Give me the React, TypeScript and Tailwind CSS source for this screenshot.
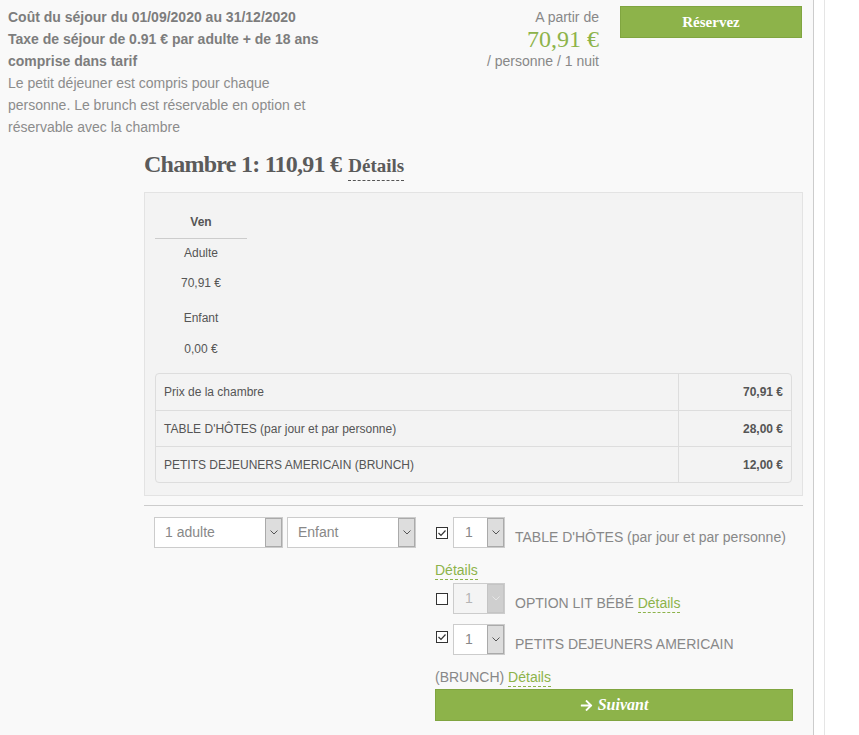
import { FaArrowRight } from 'react-icons/fa';

const sans = "font-['Liberation_Sans',Arial,sans-serif]";
const serif = "font-['Liberation_Serif','Times_New_Roman',serif]";

const Chevron = ({ light }: { light?: boolean }) => (
  <svg width="8" height="5" viewBox="0 0 8 5">
    <polyline points="0.5,0.5 4,4 7.5,0.5" fill="none" stroke={light ? '#e6e6e6' : '#555'} strokeWidth="1" />
  </svg>
);

const Check = ({ checked, className = '' }: { checked?: boolean; className?: string }) => (
  <span className={`flex h-[12px] w-[12px] shrink-0 items-center justify-center border border-[#333] bg-white ${className}`}>
    {checked && (
      <svg width="10" height="10" viewBox="0 0 10 10">
        <polyline points="1.5,5 4,7.5 8.5,2.5" fill="none" stroke="#333" strokeWidth="1.2" />
      </svg>
    )}
  </span>
);

const Select = ({ label, wide, disabled }: { label: string; wide?: boolean; disabled?: boolean }) => (
  <div
    className={`flex h-[31px] shrink-0 border border-[#ccc] ${wide ? 'w-[129px]' : 'w-[52px]'} ${
      disabled ? 'bg-[#f4f4f4] text-[#b5b5b5]' : 'bg-white text-[#888]'
    }`}
  >
    <span className={`flex-1 text-[14px] leading-[29px] ${wide ? 'pl-[10px]' : 'pl-[11px]'}`}>{label}</span>
    <span
      className={`flex w-[17px] items-center justify-center border ${
        disabled ? 'border-[#c4c4c4] bg-[#cfcfcf]' : 'border-[#aaa] bg-[#ddd]'
      }`}
    >
      <Chevron light={disabled} />
    </span>
  </div>
);

const GreenLink = ({ children }: { children: string }) => (
  <span className="inline-block border-b border-dashed border-[#8db34a] text-[14px] leading-[18px] text-[#8db34a]">
    {children}
  </span>
);

const rows = [
  { label: 'Prix de la chambre', value: '70,91 €' },
  { label: "TABLE D'HÔTES (par jour et par personne)", value: '28,00 €' },
  { label: 'PETITS DEJEUNERS AMERICAIN (BRUNCH)', value: '12,00 €' },
];

export default function App() {
  return (
    <div className={`flex min-h-[735px] w-[859px] bg-white ${sans}`}>
      <div className="w-[814px] shrink-0 border-r border-[#ccc] bg-[#f9f9f9]">
        {/* top row */}
        <div className="flex items-start pl-[8px] pr-[11px] pt-[6px]">
          <div className="w-[320px] text-[14px] leading-[22px]">
            <div className="font-bold text-[#7d7d7d]">
              Coût du séjour du 01/09/2020 au 31/12/2020
              <br />
              Taxe de séjour de 0.91 € par adulte + de 18 ans comprise dans tarif
            </div>
            <div className="text-[#8c8c8c]">
              Le petit déjeuner est compris pour chaque personne. Le brunch est réservable en option et réservable
              avec la chambre
            </div>
          </div>
          <div className="flex-1 text-right text-[14px] leading-[22px] text-[#888]">
            <div>A partir de</div>
            <div className={`${serif} text-[24px] leading-[22px] text-[#8db34a]`}>70,91 €</div>
            <div>/ personne / 1 nuit</div>
          </div>
          <button
            className={`ml-[21px] h-[32px] w-[182px] border border-[#80a540] bg-[#8db34a] text-[15px] font-bold text-white ${serif}`}
          >
            Réservez
          </button>
        </div>

        {/* chambre */}
        <div className="pl-[144px] pr-[10px]">
          <div className="mt-[11px] flex items-baseline text-[#5b5b5b]">
            <span className={`${serif} text-[24px] font-bold leading-[30px] tracking-[-0.75px]`}>Chambre 1: 110,91 €</span>
            <span
              className={`${serif} ml-[7px] inline-block border-b border-dashed border-[#555] pb-[4px] text-[19px] font-bold leading-[20px]`}
            >
              Détails
            </span>
          </div>

          <div className="mt-[11px] border border-[#e3e3e3] bg-[#f3f3f3] px-[10px] pb-[12px] pt-[19px] text-[12px] leading-[20px] text-[#555]">
            <div className="w-[92px] text-center">
              <div className="font-bold">Ven</div>
              <div className="mt-[6px] h-px bg-[#ccc]" />
              <div className="mt-[4px]">Adulte</div>
              <div className="mt-[10px]">70,91 €</div>
              <div className="mt-[15px]">Enfant</div>
              <div className="mt-[11px]">0,00 €</div>
            </div>
            <div className="mt-[14px] overflow-hidden rounded-[4px] border border-[#ddd]">
              {rows.map((r, i) => (
                <div key={r.label} className={`flex h-[36px] items-center ${i > 0 ? 'border-t border-[#ddd]' : ''}`}>
                  <div className="flex h-full flex-1 items-center pl-[8px]">{r.label}</div>
                  <div className="flex h-full w-[113px] items-center justify-end border-l border-[#ddd] pr-[8px] font-bold">
                    {r.value}
                  </div>
                </div>
              ))}
            </div>
          </div>

          {/* options */}
          <div className="mt-[9px] flex border-t border-[#ccc] pl-[10px] pr-[10px] pt-[11px]">
            <Select label="1 adulte" wide />
            <div className="ml-[4px]">
              <Select label="Enfant" wide />
            </div>
            <div className="ml-[19px] w-[358px] text-[14px] text-[#888]">
              <div className="flex h-[31px] items-start">
                <Check checked className="ml-[1px] mt-[10px]" />
                <div className="ml-[5px]">
                  <Select label="1" />
                </div>
                <span className="ml-[10px] mt-[10px] leading-[20px]">TABLE D'HÔTES (par jour et par personne)</span>
              </div>
              <div className="mt-[11px] h-[22px] leading-[22px]">
                <GreenLink>Détails</GreenLink>
              </div>

              <div className="mt-[2px] flex h-[31px] items-start">
                <Check className="ml-[1px] mt-[10px]" />
                <div className="ml-[5px]">
                  <Select label="1" disabled />
                </div>
                <span className="ml-[10px] mt-[10px] leading-[20px]">
                  OPTION LIT BÉBÉ <GreenLink>Détails</GreenLink>
                </span>
              </div>

              <div className="mt-[10px] flex h-[31px] items-start">
                <Check checked className="ml-[1px] mt-[7px]" />
                <div className="ml-[5px]">
                  <Select label="1" />
                </div>
                <span className="ml-[10px] mt-[10px] leading-[20px]">PETITS DEJEUNERS AMERICAIN</span>
              </div>
              <div className="mt-[11px] h-[22px] leading-[22px]">
                (BRUNCH) <GreenLink>Détails</GreenLink>
              </div>

              <button
                className={`mt-px flex h-[32px] w-full items-center justify-center gap-[5px] border border-[#80a540] bg-[#8db34a] text-[16px] font-bold italic text-white ${serif}`}
              >
                <FaArrowRight className="h-[13px] w-[13px]" />
                Suivant
              </button>
            </div>
          </div>
        </div>
      </div>
      <div className="w-[10px] shrink-0 bg-white" />
      <div className="flex-1 border-l border-[#e5e5e5] bg-white" />
    </div>
  );
}
